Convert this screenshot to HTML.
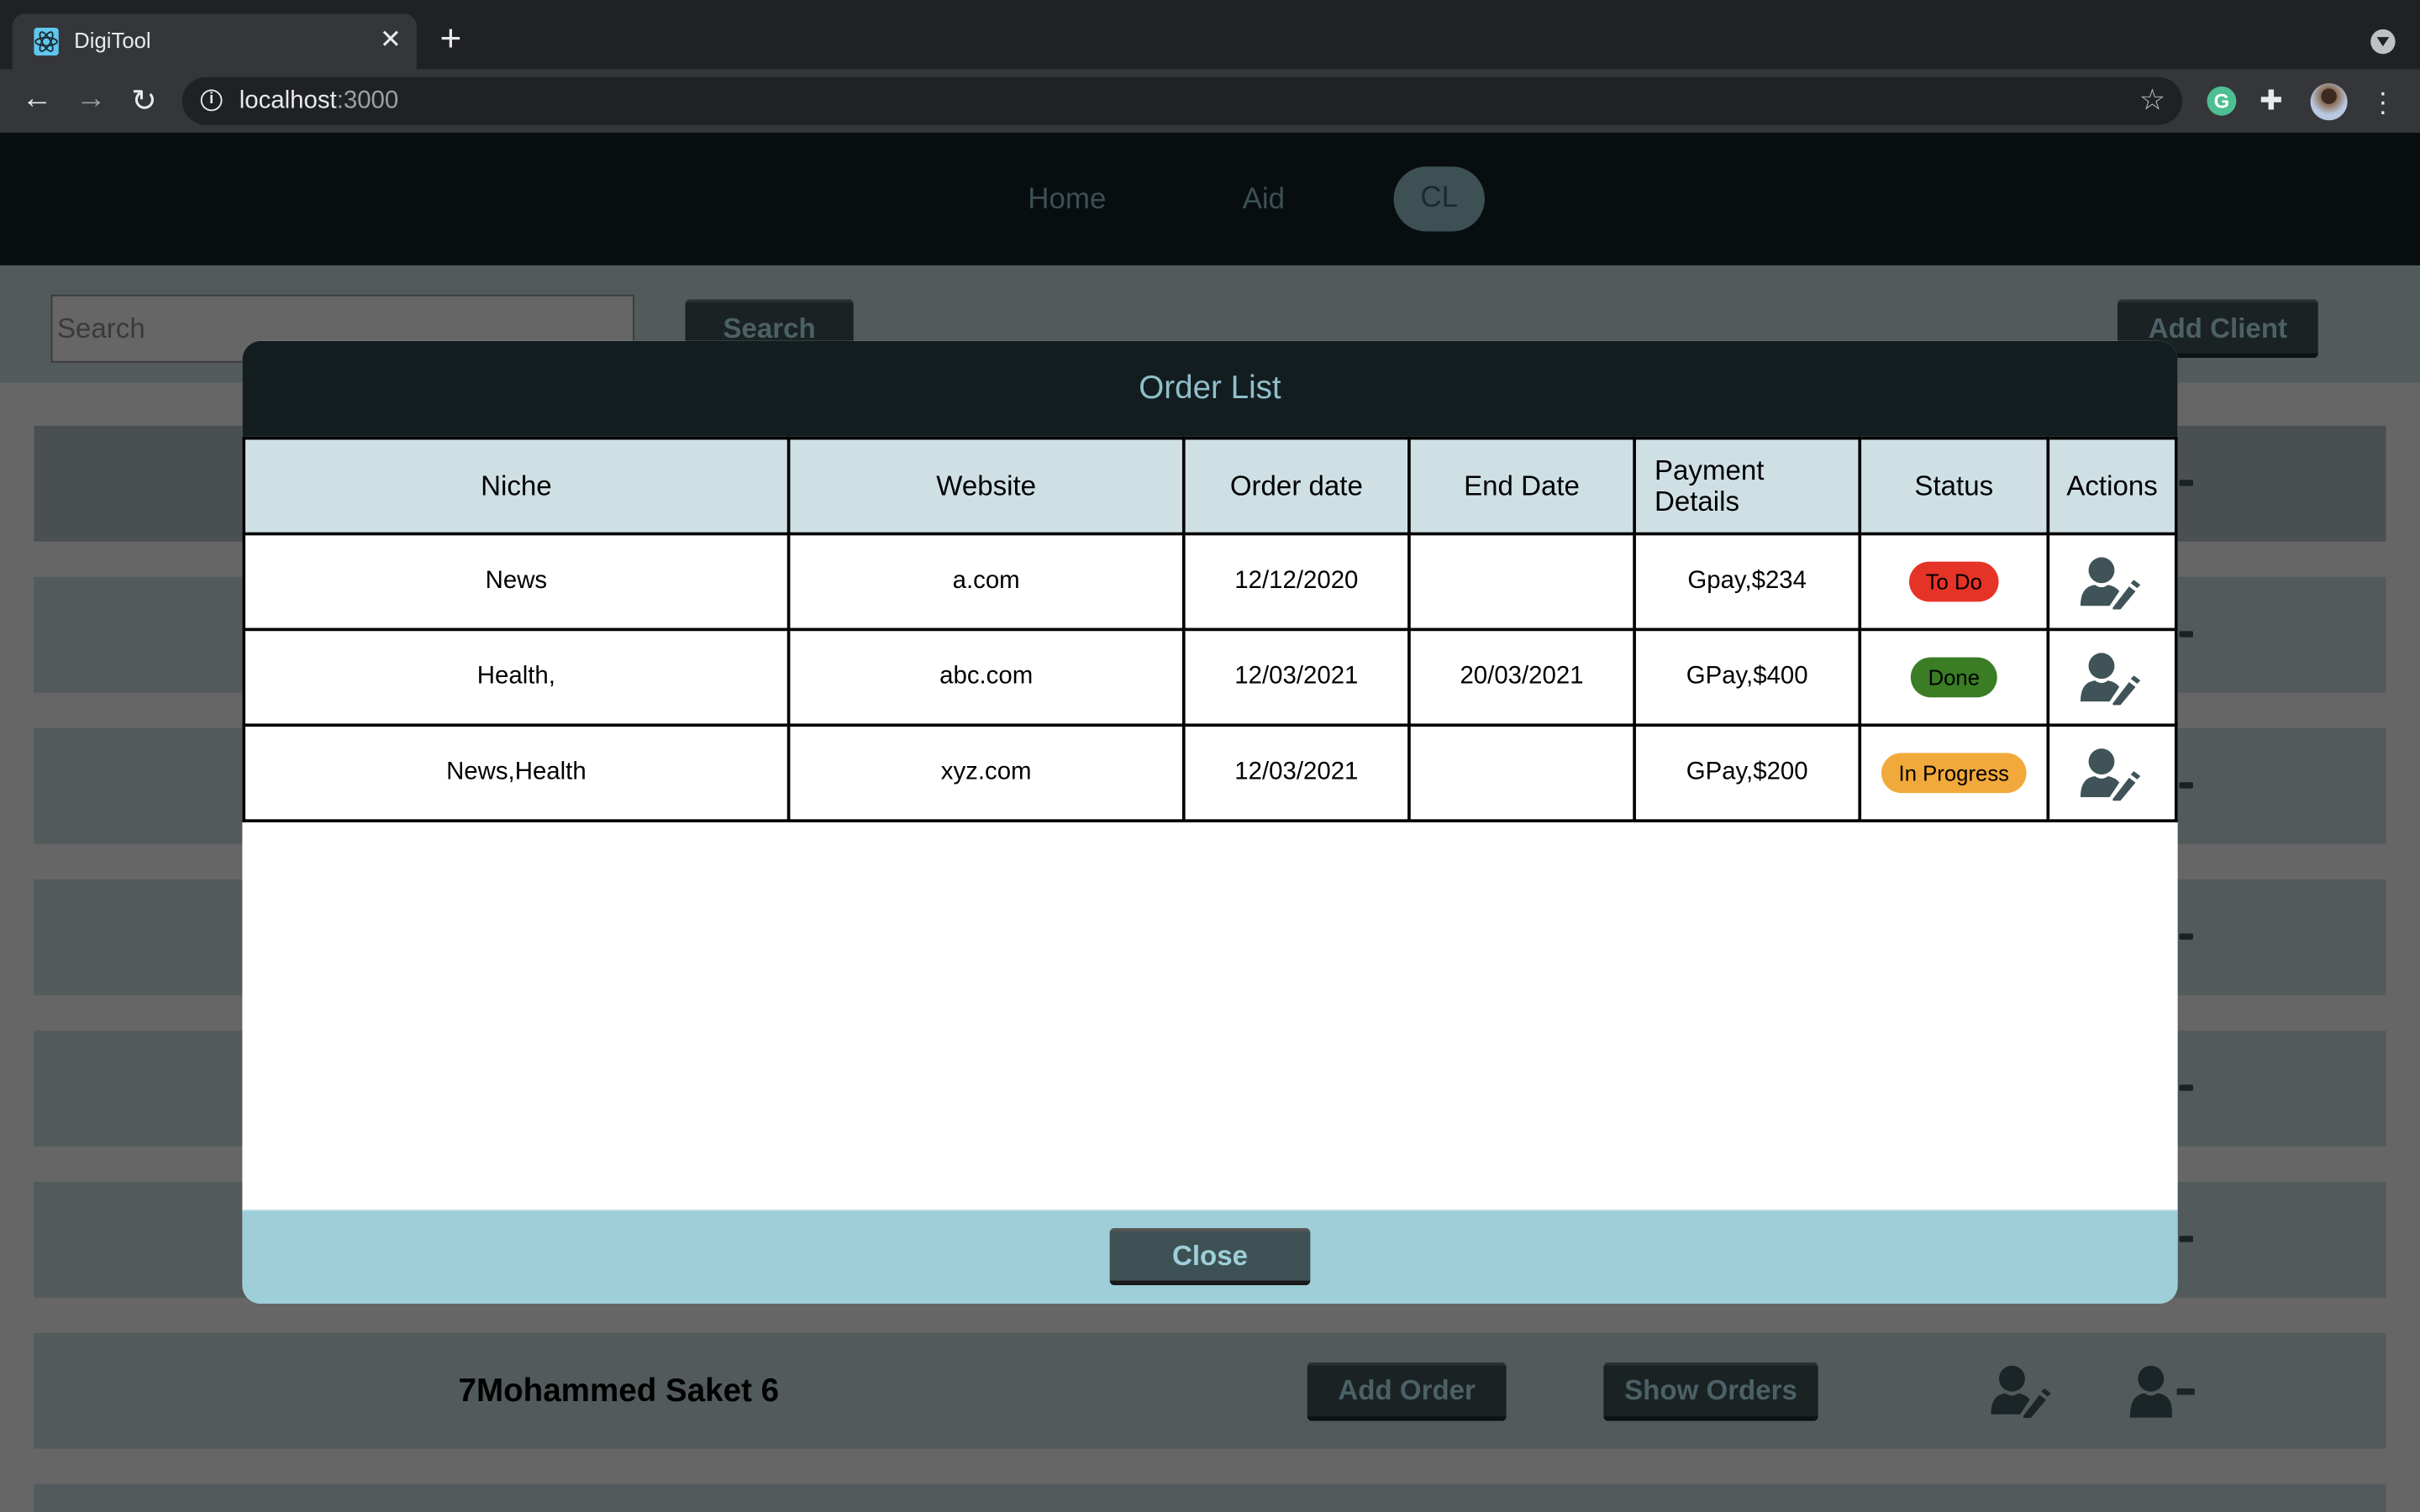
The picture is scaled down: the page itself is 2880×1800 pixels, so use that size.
<!DOCTYPE html>
<html><head><meta charset="utf-8"><style>
html,body{margin:0;padding:0;width:2880px;height:1800px;overflow:hidden;background:#666}
#s{position:absolute;left:0;top:0;width:1568px;height:980px;transform:scale(1.83673);transform-origin:0 0;font-family:"Liberation Sans",sans-serif;background:#666;overflow:hidden}
.a{position:absolute}
.row{position:absolute;left:22px;width:1524px;height:75px;background:#525a5c}
.dash{position:absolute;left:1412px;width:9px;height:4px;background:#1b2223;border-radius:1px}
table{border-collapse:collapse;position:absolute;left:157px;top:283px;width:1254px;table-layout:fixed}
td,th{border:2px solid #000;text-align:center;font-size:17px;color:#000;padding:0;height:60px}
th{background:#cfe0e5;font-weight:normal;font-size:18px}
td{background:#fff;font-size:16px}
.pill{display:inline-block;border-radius:14px;padding:5px 11px;font-size:14px;color:#000}
.btn{position:absolute;background:#1b2223;color:#4b6166;font-weight:bold;font-size:18px;text-align:center;border-radius:3px;border-bottom:3px solid #0d1112;border-top:2px solid #2a2f30;box-sizing:border-box}
</style></head><body><div id="s">
<div class="a" style="left:0;top:0;width:1568px;height:45px;background:#202124"></div>
<div class="a" style="left:8px;top:9px;width:262px;height:37px;background:#35363a;border-radius:8px 8px 0 0"></div>
<div class="a" style="left:22px;top:18px;width:16px;height:18px;background:#5fc7ee;border-radius:2px"></div>
<svg class="a" style="left:22px;top:18px" width="16" height="18" viewBox="0 0 16 18"><g fill="none" stroke="#1b2a33" stroke-width="1"><ellipse cx="8" cy="9" rx="7" ry="2.6"/><ellipse cx="8" cy="9" rx="7" ry="2.6" transform="rotate(60 8 9)"/><ellipse cx="8" cy="9" rx="7" ry="2.6" transform="rotate(-60 8 9)"/></g></svg>
<div class="a" style="left:48px;top:18px;color:#e8eaed;font-size:14px">DigiTool</div>
<div class="a" style="left:246px;top:16px;color:#e8eaed;font-size:17px">✕</div>
<div class="a" style="left:285px;top:12px;color:#e8eaed;font-size:24px">+</div>
<div class="a" style="left:1536px;top:19px;width:16px;height:16px;border-radius:50%;background:#bdc1c6"></div>
<div class="a" style="left:1540px;top:24px;width:0;height:0;border-left:4px solid transparent;border-right:4px solid transparent;border-top:6px solid #202124"></div>
<div class="a" style="left:0;top:45px;width:1568px;height:41px;background:#35363a"></div>
<div class="a" style="left:14px;top:53px;color:#e8eaed;font-size:20px">←</div>
<div class="a" style="left:49px;top:53px;color:#9aa0a6;font-size:20px">→</div>
<div class="a" style="left:85px;top:53px;color:#e8eaed;font-size:20px">↻</div>
<div class="a" style="left:118px;top:50px;width:1296px;height:31px;background:#202124;border-radius:16px"></div>
<div class="a" style="left:130px;top:58px;width:12px;height:12px;border:1.5px solid #e8eaed;border-radius:50%;color:#e8eaed;font-size:10px;text-align:center;line-height:12px;font-weight:bold">i</div>
<div class="a" style="left:155px;top:57px;color:#e8eaed;font-size:16px">localhost<span style="color:#9aa0a6">:3000</span></div>
<div class="a" style="left:1386px;top:54px;color:#bdc1c6;font-size:19px">☆</div>
<div class="a" style="left:1430px;top:56px;width:19px;height:19px;border-radius:50%;background:#4dbf92;color:#fff;font-size:13px;text-align:center;line-height:19px;font-weight:bold">G</div>
<div class="a" style="left:1464px;top:55px;color:#e8eaed;font-size:18px">✚</div>
<div class="a" style="left:1497px;top:54px;width:24px;height:24px;border-radius:50%;background:radial-gradient(circle at 50% 35%,#3a2a20 25%,#8a6a50 26%,#b8c8e0 60%)"></div>
<div class="a" style="left:1541px;top:57px;color:#e8eaed;font-size:18px;line-height:6px">·<br>·<br>·</div>
<div class="a" style="left:0;top:86px;width:1568px;height:86px;background:#080e0f"></div>
<div class="a" style="left:666px;top:119px;color:#3d4f55;font-size:19px">Home</div>
<div class="a" style="left:805px;top:119px;color:#3d4f55;font-size:19px">Aid</div>
<div class="a" style="left:903px;top:108px;width:59px;height:42px;border-radius:21px;background:#3d5155;color:#1b2a2e;font-size:19px;text-align:center;line-height:42px">CL</div>
<div class="a" style="left:0;top:172px;width:1568px;height:76px;background:#525a5c"></div>
<div class="a" style="left:33px;top:191px;width:378px;height:44px;background:#666;border:1px solid #3a3a3a;color:#3a3a3a;font-size:18px;line-height:42px;padding-left:3px;box-sizing:border-box">Search</div>
<div class="btn" style="left:444px;top:194px;width:109px;height:37px;line-height:34px">Search</div>
<div class="btn" style="left:1372px;top:194px;width:130px;height:38px;line-height:35px">Add Client</div>
<div class="row" style="top:276px;background:#4a4f51"></div><div class="dash" style="top:311px"></div>
<div class="row" style="top:374px"></div><div class="dash" style="top:409px"></div>
<div class="row" style="top:472px"></div><div class="dash" style="top:507px"></div>
<div class="row" style="top:570px"></div><div class="dash" style="top:605px"></div>
<div class="row" style="top:668px"></div><div class="dash" style="top:703px"></div>
<div class="row" style="top:766px"></div><div class="dash" style="top:801px"></div>
<div class="row" style="top:864px"></div>
<div class="row" style="top:962px"></div>
<div class="a" style="left:297px;top:890px;color:#000;font-weight:bold;font-size:21px">7Mohammed Saket 6</div>
<div class="btn" style="left:847px;top:883px;width:129px;height:38px;line-height:32px">Add Order</div>
<div class="btn" style="left:1039px;top:883px;width:139px;height:38px;line-height:32px">Show Orders</div>
<svg class="a" style="left:1290px;top:885px" width="42" height="34" viewBox="0 0 40 32"><g fill="#1b2427"><circle cx="13" cy="8" r="8"/><path d="M0 30 Q0 18 9 17 Q13 20 17 17 Q22 18 24 21 L18 30 Z"/><path d="M20 31 L30 18 L34 21 L24 33 L20 33Z"/><path d="M31 16 L33 14 L37 17 L35 19Z"/></g></svg>
<svg class="a" style="left:1380px;top:885px" width="42" height="34" viewBox="0 0 40 32"><g fill="#1b2427"><circle cx="13" cy="8" r="8"/><path d="M0 32 Q0 18 9 17 Q13 20 17 17 Q26 18 26 28 L26 32Z"/><rect x="29" y="14" width="11" height="4"/></g></svg>
<div class="a" style="left:157px;top:221px;width:1254px;height:624px;background:#fff;border-radius:12px;overflow:hidden">
<div class="a" style="left:0;top:0;width:1254px;height:62px;background:#131d1f;color:#8fbfcb;font-size:21px;text-align:center;line-height:62px">Order List</div>
<div class="a" style="left:0;top:563px;width:1254px;height:61px;background:#9ecfd9;border-top:1px solid #b9dde4"></div>
<div class="a" style="left:562px;top:575px;width:130px;height:37px;background:#3d5155;border-radius:3px;border-top:2px solid #555;border-bottom:3px solid #1a1a1a;box-sizing:border-box;color:#9ecfd9;font-weight:bold;font-size:18px;text-align:center;line-height:32px">Close</div>
</div>
<table>
<colgroup><col style="width:353px"><col style="width:256px"><col style="width:146px"><col style="width:146px"><col style="width:146px"><col style="width:122px"><col></colgroup>
<tr><th>Niche</th><th>Website</th><th>Order date</th><th>End Date</th><th style="text-align:left;padding-left:12px;line-height:20px">Payment<br>Details</th><th>Status</th><th>Actions</th></tr>
<tr><td>News</td><td>a.com</td><td>12/12/2020</td><td></td><td>Gpay,$234</td><td><span class="pill" style="background:#e63327">To Do</span></td><td></td></tr>
<tr><td>Health,</td><td>abc.com</td><td>12/03/2021</td><td>20/03/2021</td><td>GPay,$400</td><td><span class="pill" style="background:#3a7d24">Done</span></td><td></td></tr>
<tr><td>News,Health</td><td>xyz.com</td><td>12/03/2021</td><td></td><td>GPay,$200</td><td><span class="pill" style="background:#f2a93b">In Progress</span></td><td></td></tr>
</table>
<svg class="a" style="left:1348px;top:361px" width="42" height="34" viewBox="0 0 40 32"><g fill="#3f5358"><circle cx="13" cy="8" r="8"/><path d="M0 30 Q0 18 9 17 Q13 20 17 17 Q22 18 24 21 L18 30 Z"/><path d="M20 31 L30 18 L34 21 L24 33 L20 33Z"/><path d="M31 16 L33 14 L37 17 L35 19Z"/></g></svg>
<svg class="a" style="left:1348px;top:423px" width="42" height="34" viewBox="0 0 40 32"><g fill="#3f5358"><circle cx="13" cy="8" r="8"/><path d="M0 30 Q0 18 9 17 Q13 20 17 17 Q22 18 24 21 L18 30 Z"/><path d="M20 31 L30 18 L34 21 L24 33 L20 33Z"/><path d="M31 16 L33 14 L37 17 L35 19Z"/></g></svg>
<svg class="a" style="left:1348px;top:485px" width="42" height="34" viewBox="0 0 40 32"><g fill="#3f5358"><circle cx="13" cy="8" r="8"/><path d="M0 30 Q0 18 9 17 Q13 20 17 17 Q22 18 24 21 L18 30 Z"/><path d="M20 31 L30 18 L34 21 L24 33 L20 33Z"/><path d="M31 16 L33 14 L37 17 L35 19Z"/></g></svg>
</div></body></html>
